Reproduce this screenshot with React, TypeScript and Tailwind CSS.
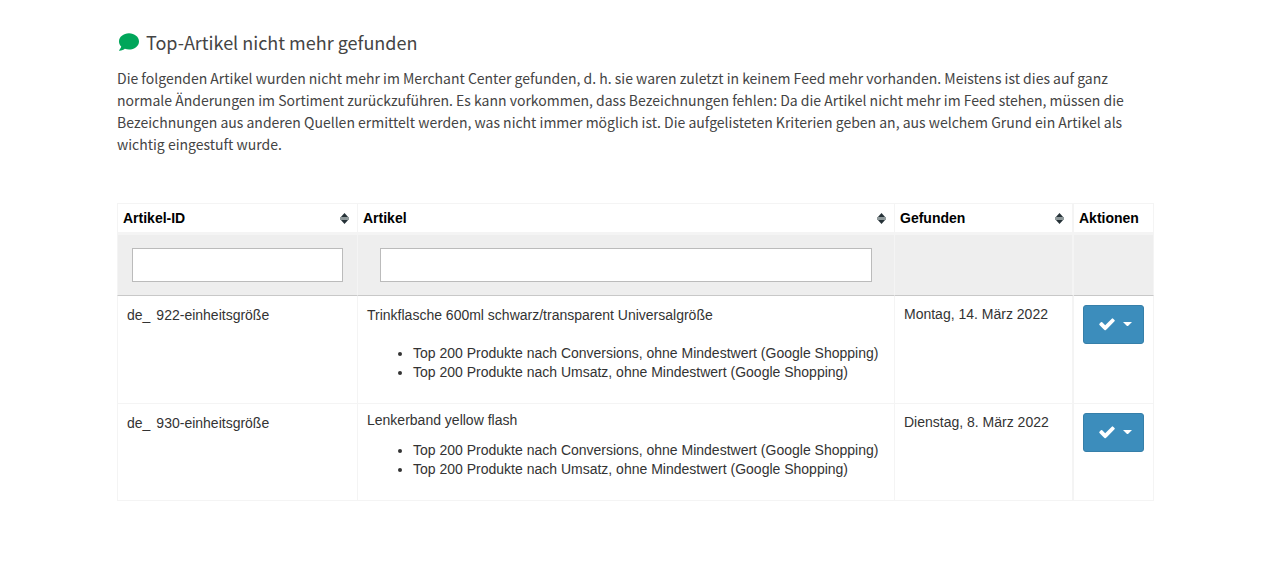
import React, { useState } from 'react'
import { FaComment } from 'react-icons/fa'

interface Article {
  prefix: string
  id: string
  title: string
  found: string
  reasons: string[]
  titleClass: string
}

const articles: Article[] = [
  {
    prefix: 'de_',
    id: '922-einheitsgröße',
    title: 'Trinkflasche 600ml schwarz/transparent Universalgröße',
    found: 'Montag, 14. März 2022',
    reasons: [
      'Top 200 Produkte nach Conversions, ohne Mindestwert (Google Shopping)',
      'Top 200 Produkte nach Umsatz, ohne Mindestwert (Google Shopping)',
    ],
    titleClass: 'mt-[10px] mb-[19px]',
  },
  {
    prefix: 'de_',
    id: '930-einheitsgröße',
    title: 'Lenkerband yellow flash',
    found: 'Dienstag, 8. März 2022',
    reasons: [
      'Top 200 Produkte nach Conversions, ohne Mindestwert (Google Shopping)',
      'Top 200 Produkte nach Umsatz, ohne Mindestwert (Google Shopping)',
    ],
    titleClass: 'mt-[7px] mb-[11px]',
  },
]

const CheckIcon = () => (
  <svg className="size-[18px]" viewBox="0 0 1792 1792" aria-hidden="true">
    <path
      fill="currentColor"
      d="M1671 566q0 40-28 68l-724 724-136 136q-28 28-68 28t-68-28l-136-136-362-362q-28-28-28-68t28-68l136-136q28-28 68-28t68 28l294 295 656-657q28-28 68-28t68 28l136 136q28 28 28 68z"
    />
  </svg>
)

const SortIcon = () => (
  <svg width="9" height="11" viewBox="0 0 9 11" aria-hidden="true">
    <path d="M4.5 0 9 5H0z" fill="#263238" />
    <path d="M4.5 11 9 6H0z" fill="#263238" />
    <path d="M0 4h9v3H0z" fill="#8f999b" />
  </svg>
)

interface HeadCellProps {
  label: string
  className: string
  sortable?: boolean
}

const HeadCell: React.FC<HeadCellProps> = ({ label, className, sortable = true }) => (
  <th
    scope="col"
    className={`border-t border-b-[3px] border-[#f4f4f4] px-[5px] text-left font-bold text-black ${className}`}
  >
    {sortable ? (
      <button type="button" className="flex h-7 w-full items-center justify-between pr-[3px]">
        {label}
        <SortIcon />
      </button>
    ) : (
      <div className="flex h-7 items-center">{label}</div>
    )}
  </th>
)

export default function App() {
  const [idFilter, setIdFilter] = useState('')
  const [titleFilter, setTitleFilter] = useState('')

  const rows = articles.filter(
    (a) =>
      (a.prefix + a.id).toLowerCase().includes(idFilter.toLowerCase()) &&
      a.title.toLowerCase().includes(titleFilter.toLowerCase())
  )

  return (
    <main className="bg-white pt-[29px] pr-[126px] pb-16 pl-[117px]">
      {/* Intro */}
      <section className="font-['Noto_Sans_CJK_SC',sans-serif] text-[#444]">
        <h1 className="flex items-center gap-[7px] pl-[2px] text-[18px] leading-[26px]">
          <FaComment className="size-5 text-[#00a65a]" />
          Top-Artikel nicht mehr gefunden
        </h1>
        <p className="mt-3 text-[14px] leading-[22px]">
          Die folgenden Artikel wurden nicht mehr im Merchant Center gefunden, d. h. sie waren
          zuletzt in keinem Feed mehr vorhanden. Meistens ist dies auf ganz normale Änderungen im
          Sortiment zurückzuführen. Es kann vorkommen, dass Bezeichnungen fehlen: Da die Artikel
          nicht mehr im Feed stehen, müssen die Bezeichnungen aus anderen Quellen ermittelt werden,
          was nicht immer möglich ist. Die aufgelisteten Kriterien geben an, aus welchem Grund ein
          Artikel als wichtig eingestuft wurde.
        </p>
      </section>

      {/* Article table */}
      <table className="mt-12 w-full table-fixed border-separate border-spacing-0 font-['Liberation_Sans',Arial,sans-serif] text-[14px] leading-[19px] text-[#333]">
        <thead>
          <tr>
            <HeadCell label="Artikel-ID" className="w-[241px] border-x" />
            <HeadCell label="Artikel" className="border-r" />
            <HeadCell label="Gefunden" className="w-[179px] border-r-2" />
            <HeadCell label="Aktionen" className="w-20 border-r" sortable={false} />
          </tr>
          <tr className="bg-[#eee]">
            <td className="border-x border-b border-[#f4f4f4] border-b-[#c8c8c8] px-[14px] py-[13px]">
              <input
                type="text"
                aria-label="Artikel-ID"
                value={idFilter}
                onChange={(e) => setIdFilter(e.target.value)}
                className="block h-[34px] w-full border border-[#bbb] bg-white px-2"
              />
            </td>
            <td className="border-r border-b border-[#f4f4f4] border-b-[#c8c8c8] px-[22px] py-[13px]">
              <input
                type="text"
                aria-label="Artikel"
                value={titleFilter}
                onChange={(e) => setTitleFilter(e.target.value)}
                className="block h-[34px] w-full border border-[#bbb] bg-white px-2"
              />
            </td>
            <td className="border-r-2 border-b border-[#f4f4f4] border-b-[#c8c8c8]" />
            <td className="border-r border-b border-[#f4f4f4] border-b-[#c8c8c8]" />
          </tr>
        </thead>
        <tbody>
          {rows.map((a) => (
            <tr key={a.id} className="align-top">
              <td className="border-x border-b border-[#f4f4f4] px-[9px] pt-[10px]">
                <div className="flex gap-[6px]">
                  <span>{a.prefix}</span>
                  <span>{a.id}</span>
                </div>
              </td>
              <td className="border-r border-b border-[#f4f4f4] px-[9px] pb-[21px]">
                <p className={a.titleClass}>{a.title}</p>
                <ul className="list-disc pl-[46px]">
                  {a.reasons.map((r) => (
                    <li key={r}>{r}</li>
                  ))}
                </ul>
              </td>
              <td className="border-r-2 border-b border-[#f4f4f4] px-[9px] pt-[9px]">{a.found}</td>
              <td className="border-r border-b border-[#f4f4f4] px-[9px] pt-[9px]">
                <button
                  type="button"
                  aria-label="Aktionen"
                  className="flex h-[39px] w-full items-center justify-center gap-[7px] rounded-[3px] border border-[#367fa9] bg-[#3c8dbc] pb-[2px] pl-[3px] text-white"
                >
                  <CheckIcon />
                  <svg width="9" height="4" viewBox="0 0 9 4" aria-hidden="true">
                    <path d="M0 0h9L4.5 4.5z" fill="currentColor" />
                  </svg>
                </button>
              </td>
            </tr>
          ))}
        </tbody>
      </table>
    </main>
  )
}
